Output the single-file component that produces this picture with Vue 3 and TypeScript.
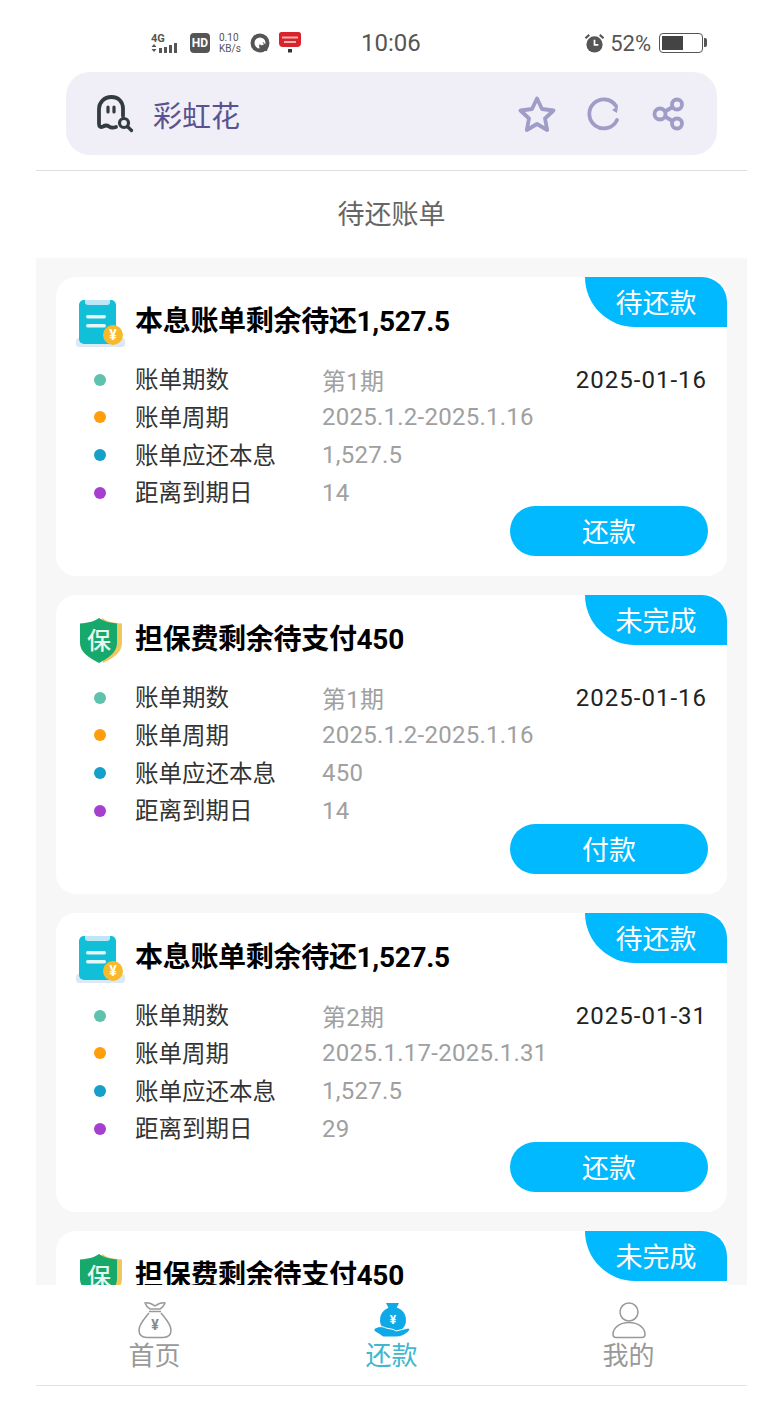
<template>
  <div class="page">
    <div class="status">
      <div class="status-left">
        <svg class="sig" viewBox="0 0 30 24" width="30" height="24">
          <text x="0" y="10" font-size="11" font-weight="700" fill="#555" font-family="Roboto, sans-serif">4G</text>
          <path d="M3 12l2.500 3h-5zM3 20l2.500-3h-5z" fill="#555" />
          <rect x="8" y="16" width="3" height="5" fill="#555" />
          <rect x="13" y="15" width="3" height="6" fill="#555" />
          <rect x="18" y="13" width="3" height="8" fill="#555" />
          <rect x="23" y="11" width="3" height="10" fill="#555" />
        </svg>
        <span class="hd">HD</span>
        <span class="speed"><b>0.10</b><b>KB/s</b></span>
        <svg viewBox="0 0 20 20" width="20" height="20">
          <circle cx="10" cy="10" r="7.500" fill="none" stroke="#555" stroke-width="4" />
          <path d="M9 12l4-3 5 5-1 4h-7z" fill="#555" />
          <path d="M9 9.500l3-1 2 3-3 1z" fill="#fff" />
        </svg>
        <svg viewBox="0 0 22 24" width="22" height="24">
          <path d="M2.500 1h17A2.500 2.500 0 0 1 22 3.500V12a4 4 0 0 1-4 4H4a4 4 0 0 1-4-4V3.500A2.500 2.500 0 0 1 2.500 1z" fill="#d8232c" />
          <path d="M3 6.500h16M5 11h12" stroke="#f4b0b0" stroke-width="2" />
          <rect x="9" y="18" width="4" height="3.500" fill="#333" />
        </svg>
      </div>
      <span class="time">10:06</span>
      <div class="status-right">
        <svg viewBox="0 0 22 22" width="21" height="21">
          <circle cx="11" cy="12" r="8.500" fill="#555" />
          <path d="M11 7v5.500h4" fill="none" stroke="#fff" stroke-width="1.800" />
          <path d="M1.500 5.500l4-3.500M20.500 5.500l-4-3.500" stroke="#555" stroke-width="2.200" />
        </svg>
        <span class="pct">52%</span>
        <span class="batt"><i /></span>
      </div>
    </div>

    <div class="addr">
      <svg class="ghost" viewBox="0 0 40 40" width="40" height="40">
        <path d="M27 22V14.500C27 8.500 23 3 15.500 3S3 8.500 3 15v15c0 3 2 3.500 4 2.500 2.500-1.500 4-1.500 6 0 2 1.500 4 1.500 7 .5" fill="none" stroke="#333c3c" stroke-width="3.800" stroke-linecap="round" />
        <path d="M12 13v5M18 13v5" stroke="#333c3c" stroke-width="3.200" stroke-linecap="round" />
        <circle cx="28" cy="29" r="4.500" fill="none" stroke="#333c3c" stroke-width="3.200" />
        <path d="M32 33l3.500 3.500" stroke="#333c3c" stroke-width="3.200" stroke-linecap="round" />
      </svg>
      <span class="addr-name">彩虹花</span>
      <div class="addr-acts">
        <svg viewBox="0 0 38 38" width="38" height="38">
          <path d="M19 3.500l5 10.500 11.500 1.500-8.500 8 2.200 11.500L19 29l-10.200 6L11 23.500l-8.500-8L14 14z" fill="none" stroke="#a09cc8" stroke-width="3.800" stroke-linejoin="round" />
        </svg>
        <svg viewBox="0 0 34 34" width="34" height="34">
          <path d="M30 23A14.500 14.500 0 1 1 29 9" fill="none" stroke="#a09cc8" stroke-width="3.800" stroke-linecap="round" />
          <path d="M31 9l-1 7-5-3z" fill="#a09cc8" />
        </svg>
        <svg viewBox="0 0 34 34" width="34" height="34">
          <circle cx="8" cy="17" r="5.500" fill="none" stroke="#a09cc8" stroke-width="3.800" />
          <circle cx="25" cy="7.500" r="5" fill="none" stroke="#a09cc8" stroke-width="3.800" />
          <circle cx="25" cy="26.500" r="5" fill="none" stroke="#a09cc8" stroke-width="3.800" />
          <path d="M13 14.500l7.500-4.500M13 19.500l7.500 4.500" stroke="#a09cc8" stroke-width="3.800" />
        </svg>
      </div>
    </div>

    <div class="title">待还账单</div>

    <main class="list">
      <section v-for="b in bills" :key="b.id" class="card">
        <span class="tag">{{ b.tag }}</span>
        <div class="card-head">
          <svg v-if="b.kind === 'bill'" viewBox="0 0 50 50" width="50" height="50">
            <rect x="0" y="40" width="49" height="9" rx="3" fill="#d9e9f6" />
            <rect x="3" y="2" width="37" height="44" rx="5" fill="#12bfd9" />
            <path d="M9 2h25v2a3 3 0 0 1-3 3H12a3 3 0 0 1-3-3z" fill="#bfe6f6" />
            <rect x="10" y="17" width="20" height="3.500" rx="1.700" fill="#e4f8fb" />
            <rect x="10" y="26" width="20" height="3.500" rx="1.700" fill="#e4f8fb" />
            <circle cx="37" cy="37" r="10" fill="#f9b92d" />
            <text x="37" y="42" font-size="14" font-weight="700" fill="#fff" text-anchor="middle" font-family="Roboto, sans-serif">¥</text>
          </svg>
          <svg v-else viewBox="0 0 50 50" width="50" height="50">
            <path d="M26 2c4 3 10 5 20 5.500V27c0 9-8 15-19 20z" fill="#f0c65e" />
            <path d="M23 2c4 3 10 5 18 5.500V27c0 9-8 15-18 20C13 42 4 36 4 27V7.500C13 7 19 5 23 2z" fill="#17a86b" />
            <text x="23" y="33" font-size="24" font-weight="500" fill="#e6f7ef" text-anchor="middle" font-family="'Noto Sans CJK SC', sans-serif">保</text>
          </svg>
          <h2>{{ b.title }}</h2>
        </div>
        <div class="rows">
          <template v-for="r in b.rows" :key="r.label">
            <span class="dot" :style="{ background: r.color }" />
            <span class="lab">{{ r.label }}</span>
            <span class="val">{{ r.value }}</span>
            <span class="date">{{ r.date }}</span>
          </template>
        </div>
        <button class="pay">{{ b.action }}</button>
      </section>
    </main>

    <nav class="tabs">
      <div class="tab">
        <svg viewBox="0 0 38 38" width="38" height="38">
          <path d="M9 2c4-1 7 1 10 3 3-2 6-4 10-3-1 3-3 5-5 6H14c-2-1-4-3-5-6z" fill="none" stroke="#999" stroke-width="1.500" />
          <path d="M13 10.500h12" stroke="#999" stroke-width="1.500" />
          <path d="M13 12C9 17 3 23 3 29c0 5 3 7.500 8 7.500h16c5 0 8-2.500 8-7.500 0-6-6-12-10-17" fill="none" stroke="#999" stroke-width="1.500" />
          <text x="19" y="29" font-size="14" font-weight="700" fill="#888" text-anchor="middle" font-family="Roboto, sans-serif">¥</text>
        </svg>
        <span>首页</span>
      </div>
      <div class="tab on">
        <svg viewBox="0 0 38 38" width="38" height="38">
          <path d="M13 2h13l-3 6h-7z" fill="#10a9e8" />
          <circle cx="20" cy="19" r="13" fill="#10a9e8" />
          <path d="M1 28c4-3 8-3 12-1 4 1 8 1 10 3l12-3c2 0 2 2 1 3-4 4-8 6-13 6H10c-2-2-6-4-9-6z" fill="#10a9e8" stroke="#fff" stroke-width="1" />
          <text x="20" y="23" font-size="12" font-weight="700" fill="#fff" text-anchor="middle" font-family="Roboto, sans-serif">¥</text>
        </svg>
        <span>还款</span>
      </div>
      <div class="tab">
        <svg viewBox="0 0 38 38" width="38" height="38">
          <circle cx="19" cy="11" r="9" fill="none" stroke="#999" stroke-width="1.500" />
          <path d="M6 36.500c-2 0-3-1-3-3 0-7 7-12 16-12s16 5 16 12c0 2-1 3-3 3z" fill="none" stroke="#999" stroke-width="1.500" />
        </svg>
        <span>我的</span>
      </div>
    </nav>
  </div>
</template>

<script setup lang="ts">
interface Row { label: string; value: string; color: string; date: string }
interface Bill { id: number; kind: 'bill' | 'guarantee'; tag: string; title: string; action: string; rows: Row[] }

const dots = ['#5fc2ae', '#ff9d0a', '#159fc9', '#a63fd0']

function makeRows(term: string, cycle: string, amount: string, days: string, due: string): Row[] {
  return [
    { label: '账单期数', value: term, color: dots[0], date: due },
    { label: '账单周期', value: cycle, color: dots[1], date: '' },
    { label: '账单应还本息', value: amount, color: dots[2], date: '' },
    { label: '距离到期日', value: days, color: dots[3], date: '' },
  ]
}

const bills: Bill[] = [
  { id: 1, kind: 'bill', tag: '待还款', title: '本息账单剩余待还1,527.5', action: '还款', rows: makeRows('第1期', '2025.1.2-2025.1.16', '1,527.5', '14', '2025-01-16') },
  { id: 2, kind: 'guarantee', tag: '未完成', title: '担保费剩余待支付450', action: '付款', rows: makeRows('第1期', '2025.1.2-2025.1.16', '450', '14', '2025-01-16') },
  { id: 3, kind: 'bill', tag: '待还款', title: '本息账单剩余待还1,527.5', action: '还款', rows: makeRows('第2期', '2025.1.17-2025.1.31', '1,527.5', '29', '2025-01-31') },
  { id: 4, kind: 'guarantee', tag: '未完成', title: '担保费剩余待支付450', action: '付款', rows: makeRows('第2期', '2025.1.17-2025.1.31', '450', '29', '2025-01-31') },
]
</script>

<style scoped>
.page { width: 759px; height: 1405px; box-sizing: border-box; padding: 0 12px 0 36px; display: flex; flex-direction: column; overflow: hidden; background: #fff; font-family: Roboto, "Noto Sans CJK SC", sans-serif; }

.status { height: 72px; box-sizing: border-box; flex: none; display: flex; align-items: center; padding: 14px 44px 0 115px; color: #555; }
.status-left { display: flex; align-items: center; gap: 9px; width: 151px; flex: none; }
.status-left .sig { margin-top: 2px; }
.hd { width: 20px; height: 20px; border-radius: 4px; background: #555; color: #fff; font-size: 12px; font-weight: 700; line-height: 20px; text-align: center; flex: none; }
.speed { display: flex; flex-direction: column; font-size: 10px; line-height: 11px; flex: none; }
.speed b { font-weight: 400; }
.time { margin: 0 0 0 59px; font-size: 24px; line-height: 1; }
.status-right { margin-left: auto; display: flex; align-items: center; gap: 5px; }
.pct { font-size: 22px; }
.batt { position: relative; width: 44px; height: 20px; box-sizing: border-box; border: 1.5px solid #555; border-radius: 4px; padding: 2px; margin-left: 3px; }
.batt i { display: block; width: 55%; height: 100%; background: #444; }
.batt::after { content: ""; position: absolute; right: -5px; top: 4px; width: 3px; height: 9px; background: #555; border-radius: 0 2px 2px 0; }

.addr { height: 83px; flex: none; margin: 0 30px; padding: 0 31px 0 30px; display: flex; align-items: center; background: #f0eff8; border-radius: 24px; }
.addr-name { margin-left: 17px; font-size: 29px; color: #5a5290; }
.addr-acts { margin-left: auto; display: flex; align-items: center; gap: 31px; }

.title { flex: none; margin-top: 15px; height: 87px; border-top: 1px solid #dedede; line-height: 89px; text-align: center; font-size: 27px; color: #666; }

.list { flex: 1; min-height: 0; overflow: hidden; background: #f7f7f7; padding: 19px 20px 0; display: flex; flex-direction: column; gap: 19px; }
.card { position: relative; flex: none; height: 299px; box-sizing: border-box; padding: 21px 20px 20px; background: #fff; border-radius: 20px; display: flex; flex-direction: column; }
.tag { position: absolute; top: 0; right: 0; width: 142px; height: 50px; padding-top: 2px; box-sizing: border-box; background: #00b9ff; border-radius: 0 25px 0 50px; color: #fff; font-size: 27px; line-height: 50px; text-align: center; }
.card-head { display: flex; align-items: center; gap: 9px; height: 49px; }
.card-head svg { flex: none; }
.card-head h2 { margin: 0 0 8px; font-size: 28px; font-weight: 700; letter-spacing: -.3px; color: #000; white-space: nowrap; }

.rows { margin-top: 14px; display: grid; grid-template-columns: 12px 216px 1fr auto; grid-auto-rows: 37.67px; align-items: center; padding-left: 18px; }
.dot { width: 12px; height: 12px; border-radius: 50%; }
.lab { margin: 0 0 3px 29px; white-space: nowrap; font-size: 23.500px; color: #333; }
.val { font-size: 24px; letter-spacing: .25px; color: #a0a0a0; white-space: nowrap; }
.date { font-size: 24px; color: #222; letter-spacing: 1px; }

.pay { align-self: flex-end; margin: -6px -1px 0 0; width: 198px; height: 50px; padding-bottom: 2px; border: 0; border-radius: 25px; background: #00b9ff; color: #fff; font: inherit; font-size: 27px; }

.tabs { flex: none; height: 100px; margin-bottom: 19px; border-bottom: 1px solid #e3e3e3; background: #fff; display: grid; grid-template-columns: repeat(3, 1fr); }
.tab { display: flex; flex-direction: column; align-items: center; padding-top: 16px; color: #999; font-size: 26px; line-height: 34px; }
.tab.on { color: #3fb7d0; }
</style>

<style>
html, body { margin: 0; background: #fff; }
</style>
